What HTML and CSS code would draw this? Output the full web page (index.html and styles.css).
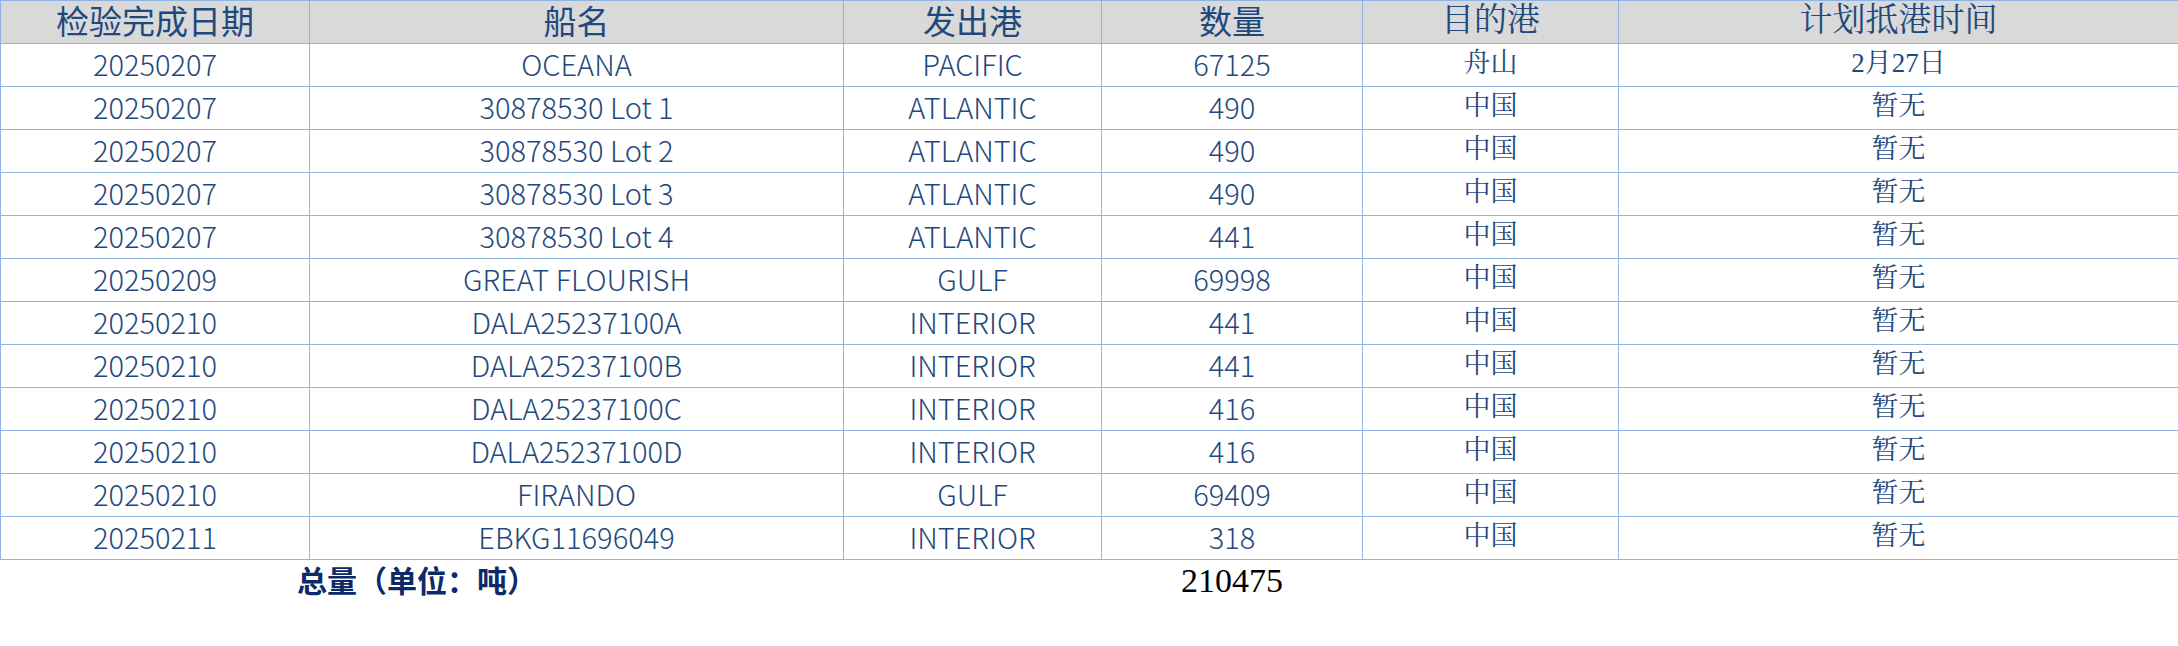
FILE: index.html
```html
<!DOCTYPE html>
<html lang="zh-CN">
<head>
<meta charset="utf-8">
<title>检验完成日期</title>
<link rel="stylesheet" href="styles.css">
</head>
<body>
<table class="sheet">
  <colgroup>
    <col class="c1"><col class="c2"><col class="c3"><col class="c4"><col class="c5"><col class="c6">
  </colgroup>
  <thead>
    <tr>
      <th>检验完成日期</th><th>船名</th><th>发出港</th><th>数量</th><th class="serif">目的港</th><th class="serif">计划抵港时间</th>
    </tr>
  </thead>
  <tbody>
    <tr><td>20250207</td><td>OCEANA</td><td>PACIFIC</td><td>67125</td><td class="serif">舟山</td><td class="serif">2月27日</td></tr>
    <tr><td>20250207</td><td>30878530 Lot 1</td><td>ATLANTIC</td><td>490</td><td class="serif">中国</td><td class="serif">暂无</td></tr>
    <tr><td>20250207</td><td>30878530 Lot 2</td><td>ATLANTIC</td><td>490</td><td class="serif">中国</td><td class="serif">暂无</td></tr>
    <tr><td>20250207</td><td>30878530 Lot 3</td><td>ATLANTIC</td><td>490</td><td class="serif">中国</td><td class="serif">暂无</td></tr>
    <tr><td>20250207</td><td>30878530 Lot 4</td><td>ATLANTIC</td><td>441</td><td class="serif">中国</td><td class="serif">暂无</td></tr>
    <tr><td>20250209</td><td>GREAT FLOURISH</td><td>GULF</td><td>69998</td><td class="serif">中国</td><td class="serif">暂无</td></tr>
    <tr><td>20250210</td><td>DALA25237100A</td><td>INTERIOR</td><td>441</td><td class="serif">中国</td><td class="serif">暂无</td></tr>
    <tr><td>20250210</td><td>DALA25237100B</td><td>INTERIOR</td><td>441</td><td class="serif">中国</td><td class="serif">暂无</td></tr>
    <tr><td>20250210</td><td>DALA25237100C</td><td>INTERIOR</td><td>416</td><td class="serif">中国</td><td class="serif">暂无</td></tr>
    <tr><td>20250210</td><td>DALA25237100D</td><td>INTERIOR</td><td>416</td><td class="serif">中国</td><td class="serif">暂无</td></tr>
    <tr><td>20250210</td><td>FIRANDO</td><td>GULF</td><td>69409</td><td class="serif">中国</td><td class="serif">暂无</td></tr>
    <tr><td>20250211</td><td>EBKG11696049</td><td>INTERIOR</td><td>318</td><td class="serif">中国</td><td class="serif">暂无</td></tr>
  </tbody>
  <tfoot>
    <tr>
      <td colspan="2" class="total-label">总量（单位：吨）</td>
      <td class="blank"></td>
      <td class="total-value">210475</td>
      <td class="blank"></td>
      <td class="blank"></td>
    </tr>
  </tfoot>
</table>
</body>
</html>
```

FILE: styles.css
```css
html, body {
  margin: 0;
  padding: 0;
  background: #ffffff;
}

.sheet {
  border-collapse: collapse;
  table-layout: fixed;
  width: 2178px;
  font-family: "Noto Sans CJK SC", "Noto Sans", sans-serif;
  color: #1f497d;
}

.c1 { width: 309px; }
.c2 { width: 534px; }
.c3 { width: 258px; }
.c4 { width: 261px; }
.c5 { width: 256px; }
.c6 { width: 560px; }

.sheet th,
.sheet td {
  border: 1px solid #8db4e2;
  padding: 0 0 3px 0;
  height: 39px;
  text-align: center;
  vertical-align: middle;
  white-space: nowrap;
  line-height: 1;
}

.sheet th {
  background: #d9d9d9;
  font-weight: 400;
  font-size: 33px;
}

.sheet td {
  font-size: 29px;
  font-weight: 300;
}

.sheet .serif {
  font-family: "Liberation Serif", "Noto Serif CJK SC", "Noto Sans CJK SC", serif;
  font-weight: 400;
  font-size: 27px;
}

.sheet th.serif {
  font-size: 33px;
}

.sheet tfoot td {
  border: none;
  height: 40px;
  padding: 4px 0 0 0;
}

.sheet tfoot .total-label {
  font-weight: 700;
  font-size: 30px;
  color: #0c2a6a;
  text-align: center;
  vertical-align: top;
  padding-right: 10px;
}

.sheet tfoot .total-value {
  font-family: "Liberation Serif", serif;
  font-size: 34px;
  font-weight: 400;
  color: #000000;
  vertical-align: top;
}
```
